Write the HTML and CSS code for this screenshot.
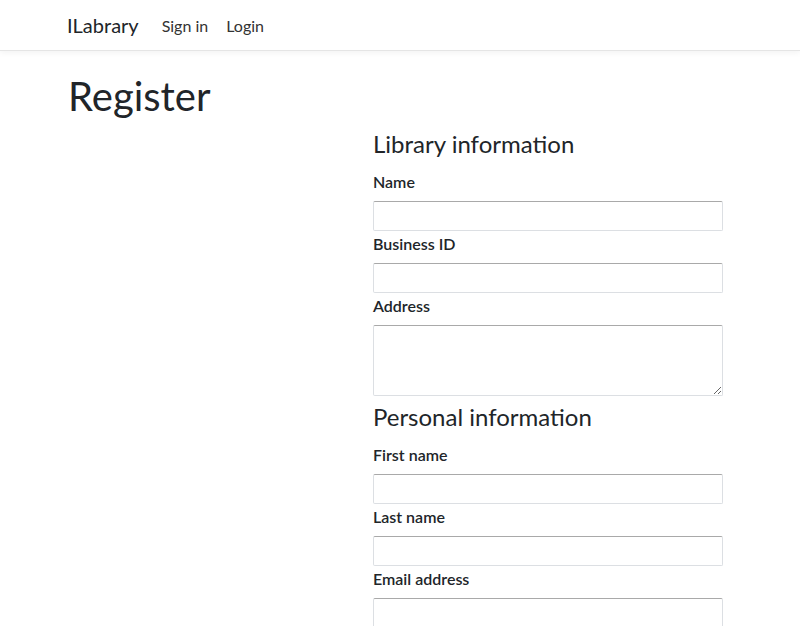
FILE: index.html
```html
<!DOCTYPE html>
<html lang="en">
<head>
<meta charset="utf-8">
<title>Register - ILabrary</title>
<link rel="stylesheet" href="styles.css">
</head>
<body>
<header class="navbar">
  <div class="container nav-inner">
    <a class="brand" href="#">ILabrary</a>
    <nav class="nav-links">
      <a href="#">Sign in</a>
      <a href="#">Login</a>
    </nav>
  </div>
</header>
<main class="container">
  <h1 class="page-title">Register</h1>
  <div class="row">
    <div class="spacer"></div>
    <form class="form-col">
      <h3 class="section-title">Library information</h3>
      <div class="field">
        <label>Name</label>
        <input type="text">
      </div>
      <div class="field">
        <label>Business ID</label>
        <input type="text">
      </div>
      <div class="field">
        <label>Address</label>
        <textarea></textarea>
      </div>
      <h3 class="section-title second">Personal information</h3>
      <div class="field">
        <label>First name</label>
        <input type="text">
      </div>
      <div class="field">
        <label>Last name</label>
        <input type="text">
      </div>
      <div class="field">
        <label>Email address</label>
        <input type="email">
      </div>
    </form>
  </div>
</main>
</body>
</html>
```
FILE: styles.css
```css
html, body {
  margin: 0;
  padding: 0;
  background: #fff;
  color: #212529;
  font-family: "Lato", "Noto Sans", sans-serif;
}
.container {
  padding-left: 68px;
  padding-right: 78px;
}
.navbar {
  height: 51px;
  border-bottom: 1px solid #e5e5e5;
  box-shadow: 0 2px 6px rgba(0,0,0,0.05);
  box-sizing: border-box;
}
.nav-inner {
  display: flex;
  align-items: center;
  height: 50px;
  padding-left: 67px;
}
.brand {
  font-size: 20px;
  color: #212529;
  text-decoration: none;
  margin-right: 23px;
}
.nav-links {
  display: flex;
  gap: 18px;
}
.nav-links a {
  font-size: 16px;
  color: #333;
  text-decoration: none;
}
.page-title {
  font-size: 40px;
  font-weight: 400;
  line-height: 48px;
  margin: 21px 0 9px;
}
.row {
  display: flex;
}
.spacer {
  width: 305px;
  flex: none;
}
.form-col {
  width: 350px;
  display: flex;
  flex-direction: column;
}
.section-title {
  font-size: 24px;
  font-weight: 400;
  line-height: 29px;
  margin: 0 0 12px;
}
.section-title.second {
  margin-top: 5px;
}
.field {
  display: flex;
  flex-direction: column;
  margin-bottom: 1px;
}
.field label {
  font-size: 16px;
  font-weight: 600;
  line-height: 24px;
  margin-bottom: 7px;
}
.field input,
.field textarea {
  box-sizing: border-box;
  width: 350px;
  height: 30px;
  border: 1px solid #dcdfe3;
  border-top-color: #a9a9a9;
  border-radius: 2px;
  margin: 0;
  font: inherit;
}
.field textarea {
  height: 71px;
}
```
